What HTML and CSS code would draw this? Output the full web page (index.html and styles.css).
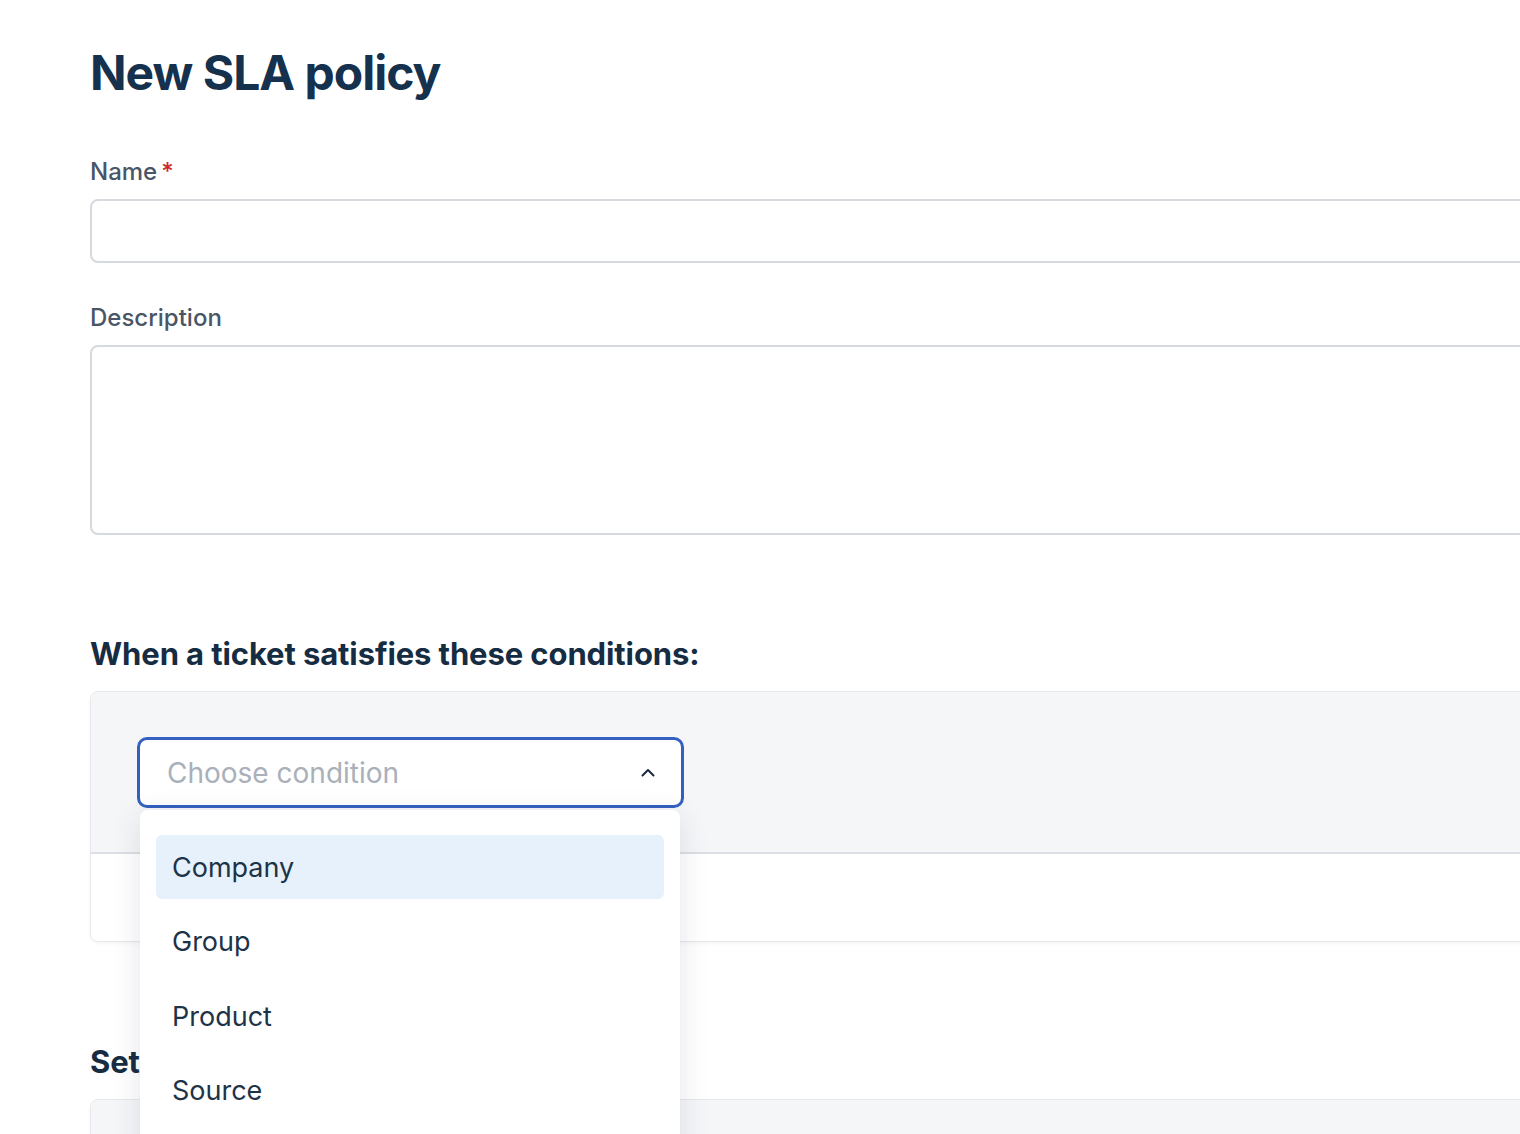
FILE: index.html
```html
<!DOCTYPE html>
<html lang="en">
<head>
  <meta charset="UTF-8">
  <meta name="viewport" content="width=device-width, initial-scale=1.0">
  <title>New SLA policy</title>
  <link rel="stylesheet" href="styles.css">
</head>
<body>
  <div class="page">
    <h1 class="page__title">New SLA policy</h1>

    <div class="field">
      <label class="field__label">Name<span class="field__req">*</span></label>
      <div class="field__input"></div>
    </div>

    <div class="field">
      <label class="field__label">Description</label>
      <div class="field__input field__input--area"></div>
    </div>

    <h2 class="section__title section__title--first">When a ticket satisfies these conditions:</h2>
    <div class="panel">
      <div class="panel__top">
        <div class="select">
          <div class="select__box">
            <span class="select__placeholder">Choose condition</span>
            <svg class="select__chevron" width="14" height="9" viewBox="0 0 14 9">
              <polyline points="1.5,7.5 7,2 12.5,7.5" fill="none" stroke="#1c2b3a" stroke-width="2" stroke-linecap="round" stroke-linejoin="round"/>
            </svg>
          </div>
          <!-- выпадающий список -->
          <div class="select__menu">
            <div class="select__item active">Company</div>
            <div class="select__item">Group</div>
            <div class="select__item">Product</div>
            <div class="select__item">Source</div>
            <div class="select__item">Type</div>
          </div>
        </div>
      </div>
      <div class="panel__bottom"></div>
    </div>

    <h2 class="section__title">Set targets:</h2>
    <div class="panel">
      <div class="panel__top"></div>
    </div>
  </div>
</body>
</html>
```

FILE: styles.css
```css
* {
  box-sizing: border-box;
  font-family: Inter, "Noto Sans", sans-serif;
}
html, body {
  margin: 0;
  overflow: hidden;
  background: #fff;
}
.page {
  width: 1700px;
  padding: 40px 0 0 90px;
}
.page__title {
  margin: 0 0 51px;
  font-size: 48px;
  line-height: 66px;
  font-weight: 700;
  letter-spacing: -1px;
  color: #15314d;
}

/* поля */
.field {
  margin-bottom: 40px;
}
.field__label {
  display: block;
  margin-bottom: 12px;
  font-size: 24px;
  line-height: 30px;
  font-weight: 500;
  color: #4a5565;
}
.field__req {
  margin-left: 4px;
  color: #d0272b;
}
.field__input {
  height: 64px;
  border: 2px solid #d6dadf;
  border-radius: 8px;
  background: #fff;
}
.field__input--area {
  height: 190px;
}

/* секции */
.section__title {
  margin: 0 0 17px;
  font-size: 31px;
  line-height: 40px;
  font-weight: 700;
  letter-spacing: -0.1px;
  color: #162c42;
}
.section__title--first {
  margin-top: 99px;
}
.panel {
  border: 1px solid #e6e8eb;
  border-radius: 8px;
  box-shadow: 0 2px 4px rgba(0, 0, 0, .04);
  margin-bottom: 100px;
}
.panel__top {
  height: 162px;
  padding: 45px 0 0 46px;
  background: #f5f6f8;
  border-radius: 8px 8px 0 0;
  border-bottom: 2px solid #dcdfe3;
}
.panel__bottom {
  height: 87px;
  background: #fff;
  border-radius: 0 0 8px 8px;
}

/* селект */
.select {
  position: relative;
  width: 547px;
}
.select__box {
  height: 71px;
  display: flex;
  align-items: center;
  justify-content: space-between;
  padding: 0 26px 0 27px;
  background: #fff;
  border: 3px solid #3461bf;
  border-radius: 10px;
}
.select__placeholder {
  font-size: 28px;
  color: #a9b0ba;
}
.select__menu {
  position: absolute;
  top: 73px;
  left: 3px;
  width: 540px;
  padding: 25px 16px 16px;
  background: #fff;
  border-radius: 8px;
  box-shadow: 0 6px 30px rgba(30, 45, 70, .12);
  z-index: 5;
}
.select__item {
  height: 64px;
  display: flex;
  align-items: center;
  padding: 0 16px;
  margin-bottom: 10.5px;
  border-radius: 6px;
  font-size: 27px;
  color: #1d3347;
}
.active.select__item {
  background: #e6f1fc;
}
```
